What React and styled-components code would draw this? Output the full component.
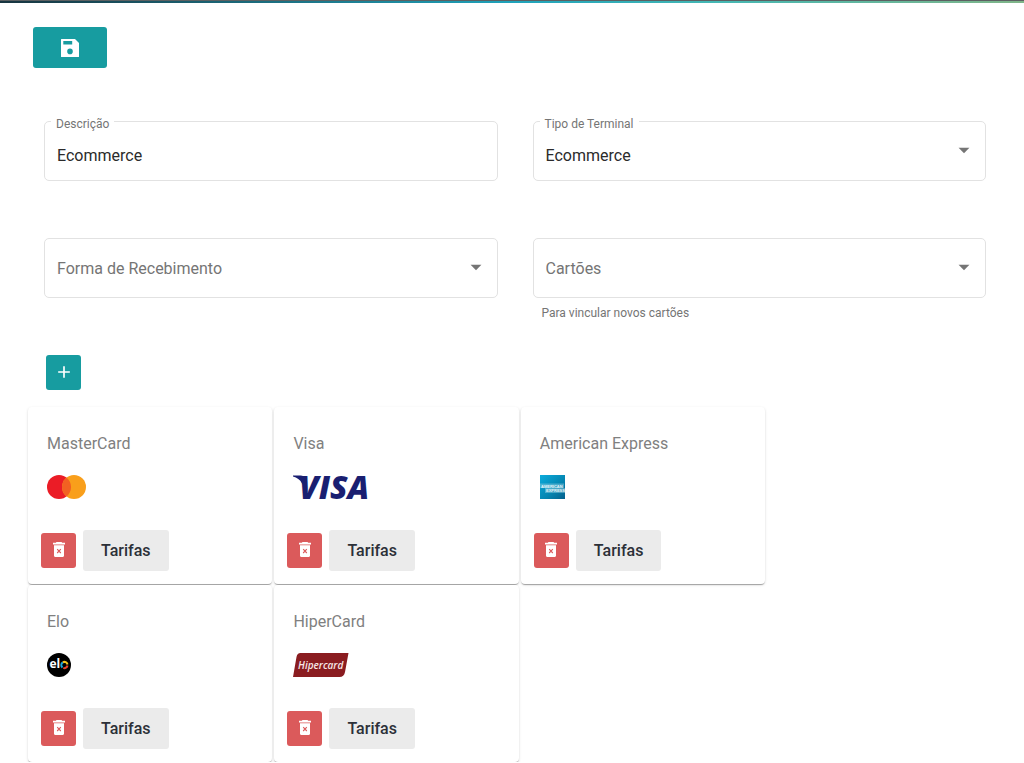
import React, { useState } from 'react';
import styled, { createGlobalStyle } from 'styled-components';
import { MdAdd, MdArrowDropDown } from 'react-icons/md';

const SaveIcon = () => (
  <svg width="24" height="24" viewBox="0 0 24 24" fill="currentColor" aria-hidden="true">
    <path
      fillRule="evenodd"
      d="M3.5 3H17l4 4v13.5a.5.5 0 0 1-.5.5h-17a.5.5 0 0 1-.5-.5v-17a.5.5 0 0 1 .5-.5zM5.3 5v3.6h8.9V5zM12 12.6a2.8 2.8 0 1 0 0 5.6 2.8 2.8 0 0 0 0-5.6z"
    />
  </svg>
);

const TrashIcon = () => (
  <svg width="12" height="15" viewBox="0 0 12 15" aria-hidden="true">
    <path
      d="M3.500 0h5l.7.800H12v1.700H0V.800h2.800zM1 3.200h10V13.800c0 .7-.5 1.200-1.200 1.200H2.200C1.500 15 1 14.500 1 13.800z"
      fill="currentColor"
    />
    <path d="M4.200 7.200l3.600 3.800M7.800 7.200L4.200 11" fill="none" stroke="#db5a5b" strokeWidth="1.100" />
  </svg>
);

const MasterCardLogo = () => (
  <svg width="39" height="24" viewBox="0 0 39 24" role="img" aria-label="MasterCard">
    <circle cx="12" cy="12" r="12" fill="#eb1c26" />
    <circle cx="27" cy="12" r="12" fill="#f99f1b" />
    <path d="M19.5 2.6a12 12 0 0 1 0 18.8a12 12 0 0 1 0-18.8z" fill="#f26122" />
  </svg>
);

const VisaLogo = () => (
  <svg width="76" height="24" viewBox="0 0 76 24" role="img" aria-label="Visa">
    <path d="M0 .5h7.5c2.500 0 3.800 1 4.300 3.200L14 14 9 8.500C7 4.500 4 2.500 0 1.500z" fill="#1a1f71" />
    <LogoText x="6" y="24" fontSize="32" fontStyle="italic" fontWeight="800" fill="#1a1f71">
      VISA
    </LogoText>
  </svg>
);

const AmexLogo = () => (
  <svg width="25" height="24" viewBox="0 0 25 24" role="img" aria-label="American Express">
    <defs>
      <linearGradient id="amex" x1="0" y1="0" x2="1" y2="1">
        <stop offset="0" stopColor="#0cacdc" />
        <stop offset="0.6" stopColor="#0484b0" />
        <stop offset="1" stopColor="#04608c" />
      </linearGradient>
    </defs>
    <rect width="25" height="24" fill="url(#amex)" />
    <rect y="8.500" width="24" height="4.500" fill="#8ccce0" opacity="0.5" />
    <rect x="5" y="13" width="20" height="5" fill="#8ccce0" opacity="0.5" />
    <AmexText x="1" y="12.500">AMERICAN</AmexText>
    <AmexText x="6" y="17">EXPRESS</AmexText>
  </svg>
);

const EloLogo = () => (
  <svg width="24" height="24" viewBox="0 0 24 24" role="img" aria-label="Elo">
    <circle cx="12" cy="12" r="12" fill="#000" />
    <LogoText x="2.500" y="15" fontSize="12" fontWeight="700" fill="#fff">el</LogoText>
    <g fill="none" strokeWidth="2">
      <path d="M15.500 14.500a3.100 3.100 0 0 1 .4-5.200" stroke="#1ba5dc" />
      <path d="M15.900 9.300a3.100 3.100 0 0 1 4.600 2.200" stroke="#f6c31c" />
      <path d="M20.500 12.500a3.100 3.100 0 0 1-4.200 2.400" stroke="#e8432d" />
    </g>
  </svg>
);

const HiperCardLogo = () => (
  <svg width="56" height="24" viewBox="0 0 56 24" role="img" aria-label="HiperCard">
    <path d="M7.500 0H55.500l-3.500 19c-.6 3.500-2.500 5-5.500 5H0L3.500 4C4 1.400 5.300 0 7.500 0z" fill="#8a1c20" />
    <LogoText x="5" y="15.500" fontSize="10" fontStyle="italic" fontWeight="600" fill="#f6e6e6">
      Hipercard
    </LogoText>
  </svg>
);

const cards = [
  { name: 'MasterCard', Logo: MasterCardLogo },
  { name: 'Visa', Logo: VisaLogo },
  { name: 'American Express', Logo: AmexLogo },
  { name: 'Elo', Logo: EloLogo },
  { name: 'HiperCard', Logo: HiperCardLogo },
];

const CardItem = ({ name, Logo, onDelete }) => (
  <Card>
    <CardContent>
      <CardTitle>{name}</CardTitle>
      <Logo />
    </CardContent>
    <CardActions>
      <IconButton $color="#db5a5b" aria-label={`Excluir ${name}`} onClick={() => onDelete(name)}>
        <TrashIcon />
      </IconButton>
      <FeeButton>Tarifas</FeeButton>
    </CardActions>
  </Card>
);

const App = () => {
  const [description, setDescription] = useState('Ecommerce');
  const [items, setItems] = useState(cards);

  const handleDelete = (name) => setItems(items.filter((item) => item.name !== name));

  return (
    <>
      <GlobalStyle />
      <TopBar />
      <Main>
        <SaveButton aria-label="Salvar">
          <SaveIcon />
        </SaveButton>
        <Form>
          <Field>
            <Label htmlFor="descricao">Descrição</Label>
            <Input
              id="descricao"
              value={description}
              onChange={(e) => setDescription(e.target.value)}
            />
          </Field>
          <Field>
            <Label htmlFor="tipo">Tipo de Terminal</Label>
            <Select id="tipo" defaultValue="ecommerce">
              <option value="ecommerce">Ecommerce</option>
            </Select>
            <Arrow size={26} />
          </Field>
          <Field>
            <Select $empty aria-label="Forma de Recebimento" defaultValue="">
              <option value="">Forma de Recebimento</option>
            </Select>
            <Arrow size={26} />
          </Field>
          <div>
            <Field>
              <Select $empty aria-label="Cartões" aria-describedby="cartoes-ajuda" defaultValue="">
                <option value="">Cartões</option>
              </Select>
              <Arrow size={26} />
            </Field>
            <HelperText id="cartoes-ajuda">Para vincular novos cartões</HelperText>
          </div>
        </Form>
        <AddRow>
          <IconButton $color="#179ca0" aria-label="Adicionar">
            <MdAdd size={20} />
          </IconButton>
        </AddRow>
        <CardGrid>
          {items.map((item) => (
            <CardItem key={item.name} {...item} onDelete={handleDelete} />
          ))}
        </CardGrid>
      </Main>
    </>
  );
};

export default App;

const GlobalStyle = createGlobalStyle`
  * {
    box-sizing: border-box;
  }
  body {
    margin: 0;
    background: #fff;
    font-family: Roboto, "Liberation Sans", sans-serif;
  }
  button, input, select {
    font-family: inherit;
  }
`;

const TopBar = styled.div`
  height: 3px;
  border-top: 1px solid #5c6062;
  background: linear-gradient(90deg, #17343f, #1fa3bb 50%, #45b8b4 70%, #80b588);
`;

const Main = styled.main`
  padding: 24px 13px 0 28px;
`;

const Button = styled.button`
  display: flex;
  align-items: center;
  justify-content: center;
  padding: 0;
  border: none;
  border-radius: 3px;
  color: #fff;
  cursor: pointer;
`;

const SaveButton = styled(Button)`
  width: 74px;
  height: 41px;
  margin-left: 5px;
  background: #179ca0;
`;

const IconButton = styled(Button)`
  width: 35px;
  height: 35px;
  padding-bottom: 2px;
  background: ${({ $color }) => $color};
`;

const FeeButton = styled(Button)`
  height: 41px;
  padding: 0 18px;
  background: #ebebeb;
  color: #2c3038;
  font-size: 16px;
  font-weight: 500;
`;

const Form = styled.div`
  display: grid;
  grid-template-columns: 1fr 1fr;
  gap: 57px 35px;
  padding: 53px 25px 0 16px;
`;

const Field = styled.div`
  position: relative;
  height: 60px;
  border: 1px solid #e2e2e2;
  border-radius: 5px;
`;

const Label = styled.label`
  position: absolute;
  top: -6px;
  left: 6px;
  padding: 0 5px;
  background: #fff;
  color: #757575;
  font-size: 12px;
  line-height: 16px;
`;

const Input = styled.input`
  width: 100%;
  height: 100%;
  padding: 8px 12px 0;
  border: none;
  outline: none;
  background: none;
  color: #2b2b2b;
  font-size: 16px;
`;

const Select = styled.select`
  width: 100%;
  height: 100%;
  padding: ${({ $empty }) => ($empty ? '0 12px' : '8px 12px 0')};
  border: none;
  outline: none;
  appearance: none;
  background: none;
  color: ${({ $empty }) => ($empty ? '#757575' : '#2b2b2b')};
  font-size: 16px;
`;

const Arrow = styled(MdArrowDropDown)`
  position: absolute;
  top: 15px;
  right: 8px;
  color: #757575;
  pointer-events: none;
`;

const HelperText = styled.p`
  margin: 7px 0 0;
  padding-left: 9px;
  color: #757575;
  font-size: 12px;
  line-height: 16px;
`;

const AddRow = styled.div`
  padding: 34px 18px 17px;
`;

const CardGrid = styled.div`
  display: grid;
  grid-template-columns: repeat(3, 1fr);
  gap: 1px 2px;
  width: 75%;
`;

const Card = styled.article`
  background: #fff;
  border-radius: 4px;
  box-shadow: 0 2px 1px -1px rgba(0, 0, 0, 0.2), 0 1px 1px rgba(0, 0, 0, 0.14),
    0 1px 3px rgba(0, 0, 0, 0.12);
`;

const CardContent = styled.div`
  padding: 25px 19px 31px;
  svg {
    display: block;
    overflow: visible;
  }
`;

const CardTitle = styled.h2`
  margin: 0 0 19px;
  color: #808080;
  font-size: 16px;
  font-weight: 400;
  line-height: 24px;
`;

const CardActions = styled.div`
  display: flex;
  align-items: center;
  gap: 7px;
  padding: 0 13px 13px;
`;

const LogoText = styled.text`
  font-family: "Open Sans", "Noto Sans", sans-serif;
`;

const AmexText = styled.text`
  fill: #e4f4fa;
  font-family: "Liberation Sans", sans-serif;
  font-size: 4px;
  font-weight: 700;
`;
